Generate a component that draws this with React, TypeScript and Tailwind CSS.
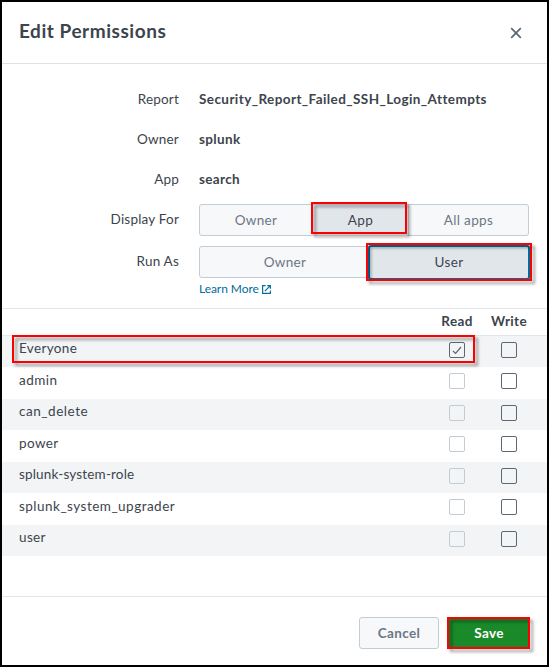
import React from "react";
import { clsx } from "clsx";

function Field({ label, className, children }: { label: string; className: string; children: React.ReactNode }) {
  return (
    <div className={clsx("flex items-start gap-5", className)}>
      <div className="w-[177px] shrink-0 text-right leading-8 tracking-[0.2px]">{label}</div>
      <div className="leading-8">{children}</div>
    </div>
  );
}

function Highlight({ className }: { className: string }) {
  return (
    <div
      className={clsx(
        "pointer-events-none absolute border-2 border-[#ff0000] drop-shadow-[3px_3px_1.5px_rgba(0,0,0,0.4)]",
        className,
      )}
    />
  );
}

function Checkbox({ checked, muted }: { checked?: boolean; muted?: boolean }) {
  return (
    <div
      className={clsx(
        "flex size-4 items-center justify-center rounded-[2px] border",
        muted ? "border-[#c3cbd4]" : "border-[#5c6773]",
      )}
    >
      {checked && (
        <svg viewBox="0 0 14 14" className="size-3.5 shrink-0" fill="none" stroke="#5c6773" strokeWidth="1.2">
          <path d="M3 8 L5.6 10.4 L11 4" />
        </svg>
      )}
    </div>
  );
}

const roles = [
  { name: "Everyone", height: "h-[31px]", text: "tracking-[0.35px] leading-[13px]" },
  { name: "admin", height: "h-8", text: "tracking-[0.5px] leading-[15px]" },
  { name: "can_delete", height: "h-[31px]", text: "tracking-[0.55px] leading-[13px]" },
  { name: "power", height: "h-8", text: "tracking-[0.4px] leading-[15px]" },
  { name: "splunk-system-role", height: "h-[31px]", text: "tracking-[0.17px] leading-[13px]" },
  { name: "splunk_system_upgrader", height: "h-8", text: "tracking-[0.48px] leading-[15px]" },
  { name: "user", height: "h-[31px]", text: "tracking-[0.35px] leading-[13px]" },
];

export default function App() {
  return (
    <div className="relative flex h-[667px] w-[549px] flex-col overflow-hidden border-2 border-black bg-white font-['Lato','Liberation_Sans',sans-serif] text-[13.5px] tracking-[0.35px] text-[#3c444d]">
      <header className="flex h-[62px] shrink-0 items-center justify-between border-b border-[#e1e1e1] pr-[25px] pl-[17px]">
        <h1 className="pb-0.5 text-[19px] font-bold tracking-[0.54px]">Edit Permissions</h1>
        <svg viewBox="0 0 12 12" className="mt-px size-3" fill="none" stroke="#5c6773" strokeWidth="1.7">
          <path d="M1.2 1.2 L10.8 10.8 M10.8 1.2 L1.2 10.8" />
        </svg>
      </header>

      <section className="flex h-[245px] shrink-0 flex-col border-b border-[#e1e6eb] pt-[19px]">
        <Field label="Report" className="h-10">
          <strong className="tracking-[0.42px]">Security_Report_Failed_SSH_Login_Attempts</strong>
        </Field>
        <Field label="Owner" className="h-10">
          <strong>splunk</strong>
        </Field>
        <Field label="App" className="h-10">
          <strong>search</strong>
        </Field>
        <Field label="Display For" className="h-[42px]">
          <div className="mt-px grid h-8 w-[330px] grid-cols-[113px_96px_1fr] rounded-[3px] border border-[#c3cbd4] bg-[#f7f8fa] text-center leading-[31px] text-[#6b7785]">
            <div className="pr-px">Owner</div>
            <div className="border-r border-[#c3cbd4] bg-[#e1e6eb] text-[#3c444d]">App</div>
            <div>All apps</div>
          </div>
        </Field>
        <Field label="Run As" className="h-8">
          <div className="mt-px grid h-8 w-[330px] grid-cols-[170px_1fr] rounded-[3px] border border-[#c3cbd4] bg-[#f7f8fa] text-center leading-[31px] text-[#6b7785]">
            <div>Owner</div>
            <div className="rounded-[1px] bg-[#e1e6eb] text-[#3c444d] shadow-[0_0_0_2px_#006d9c]">User</div>
          </div>
        </Field>
        <a className="mt-[3px] ml-[197px] flex items-center gap-[3px] text-[12px] leading-[18px] tracking-[-0.05px] text-[#006d9c]">
          Learn More
          <svg viewBox="0 0 10 10" className="size-[9px]" fill="none" stroke="currentColor" strokeWidth="1.3">
            <path d="M4 .7H.7V9.3H9.3V6M3.2 6.8L9 1M5.8 .7H9.3V4.2" />
          </svg>
        </a>
      </section>

      <div className="grid h-[27px] shrink-0 grid-cols-[429px_52px_52px] items-center border-b border-[#e1e6eb] pb-px text-center font-bold">
        <div />
        <div>Read</div>
        <div>Write</div>
      </div>
      <div className="h-[261px] shrink-0 border-b border-[#e1e6eb]">
        {roles.map((role, i) => (
          <div
            key={role.name}
            className={clsx(
              "grid grid-cols-[429px_52px_52px] justify-items-center pt-1.5",
              role.height,
              i % 2 === 0 && "bg-[#f2f4f5]",
            )}
          >
            <div className={clsx("justify-self-start pl-[17px]", role.text)}>{role.name}</div>
            <Checkbox checked={i === 0} muted={i !== 0} />
            <Checkbox />
          </div>
        ))}
      </div>

      <footer className="flex justify-end gap-2.5 pt-5 pr-[18px] font-bold">
        <button className="h-8 w-20 rounded-[3px] border border-[#c3cbd4] bg-[#f7f8fa] text-[#6b7785]">Cancel</button>
        <button className="h-8 w-[80px] bg-[#1a8929] text-white">Save</button>
      </footer>

      <Highlight className="top-[200px] left-[309px] h-8 w-24" />
      <Highlight className="top-[241px] left-[364px] h-[38px] w-[166px]" />
      <Highlight className="top-[333px] left-[10px] h-7 w-[463px]" />
      <Highlight className="top-[615px] left-[445px] h-8 w-[83px]" />
    </div>
  );
}
